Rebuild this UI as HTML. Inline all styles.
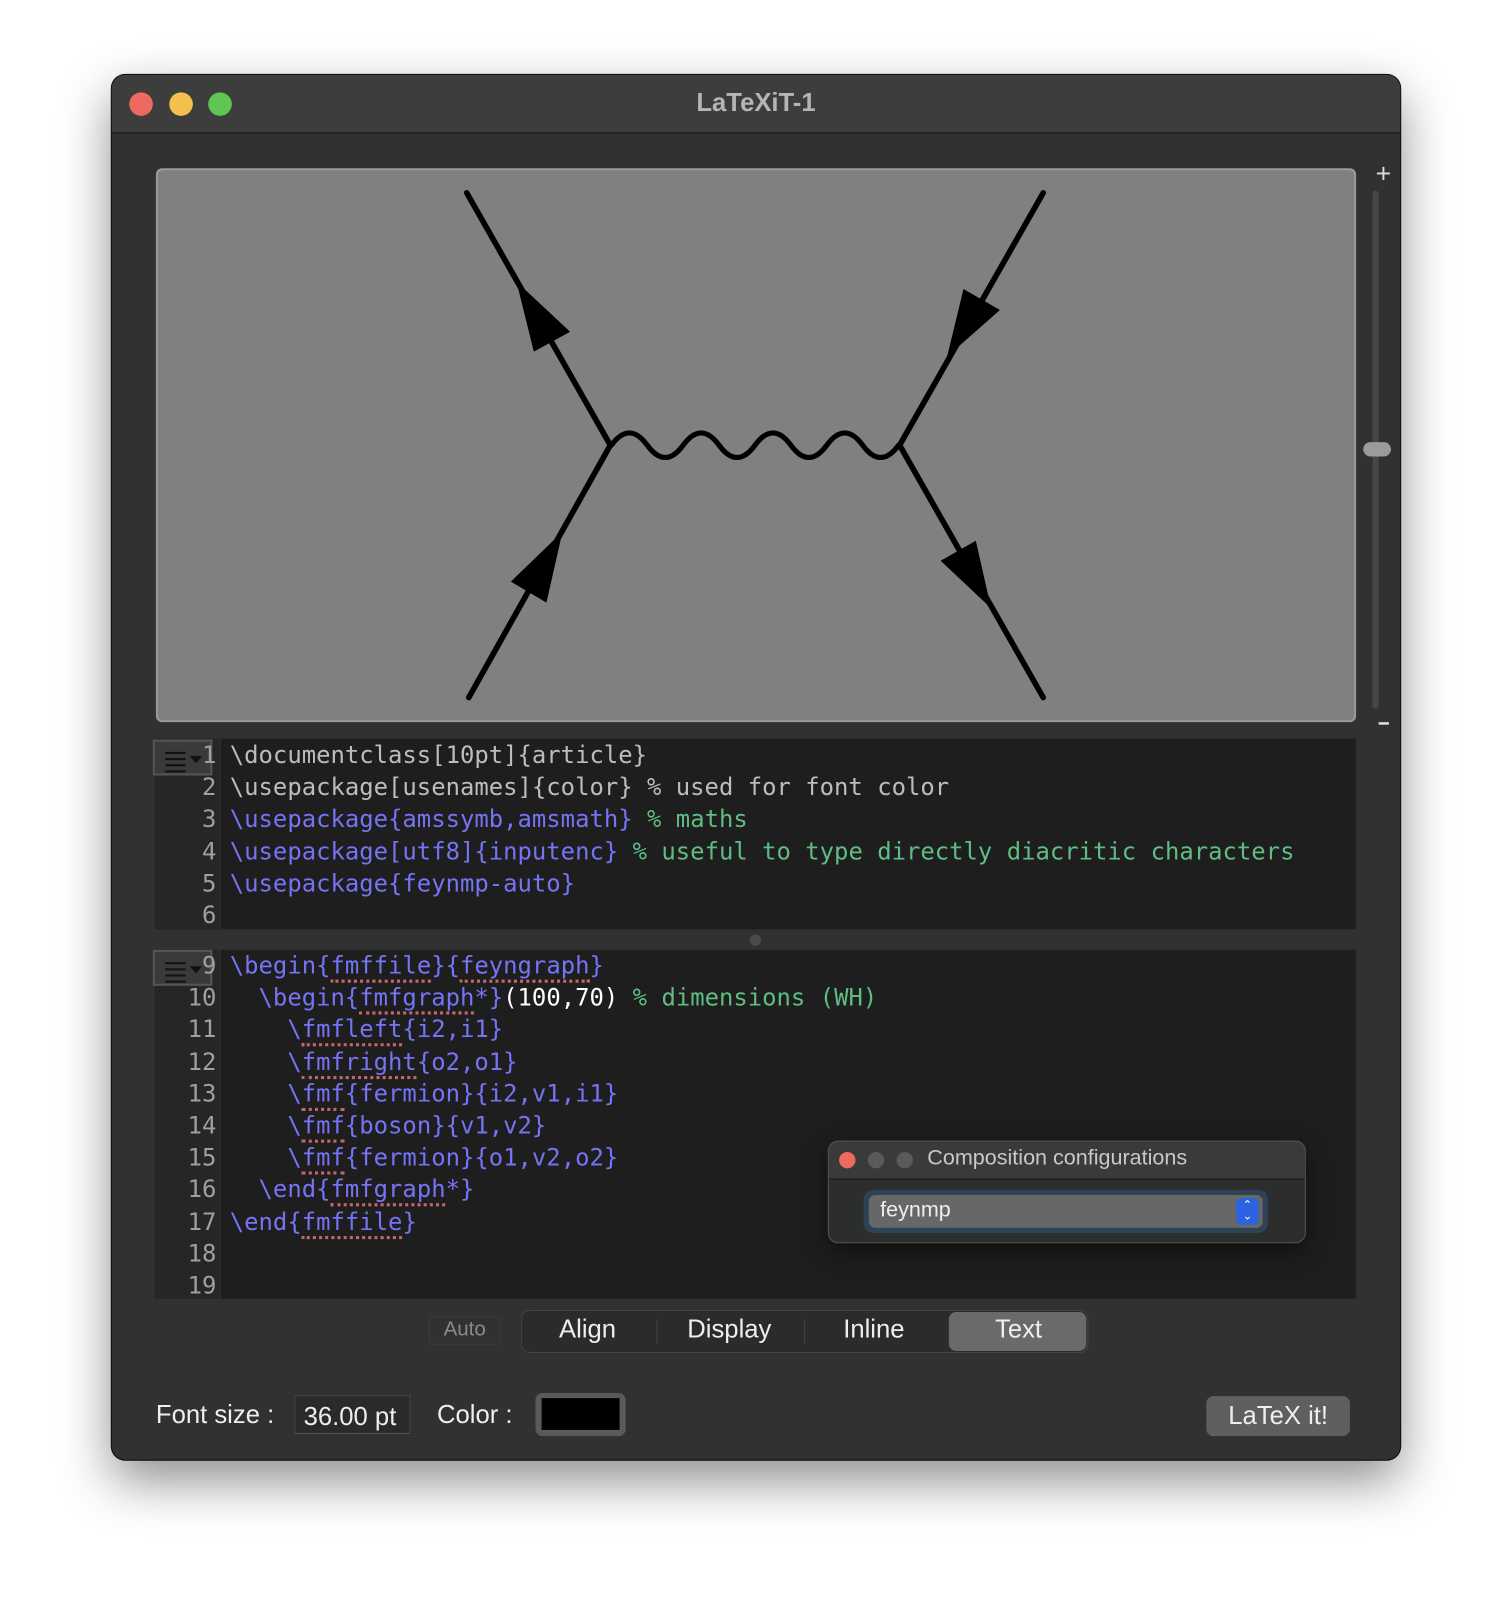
<!DOCTYPE html>
<html><head><meta charset="utf-8"><style>
html,body{margin:0;padding:0;width:1512px;height:1608px;overflow:hidden;background:#fff;}
#w{position:absolute;left:0;top:0;width:1474px;height:1568px;transform:scale(1.02578);transform-origin:0 0;font-family:"Liberation Sans",sans-serif;}
.win{position:absolute;left:109px;top:73px;width:1256px;height:1350px;border-radius:13px;background:#303131;box-shadow:0 20px 50px rgba(0,0,0,.45),0 0 0 1px #111;overflow:hidden;}
.tb{position:absolute;left:0;top:0;width:100%;height:56px;background:#3c3d3c;border-bottom:1.5px solid #111;}
.dot{position:absolute;top:17px;width:23px;height:23px;border-radius:50%;}
.title{position:absolute;left:0;right:0;top:13px;text-align:center;color:#b5b5b5;font-weight:bold;font-size:25px;}
.abs{position:absolute;}
.ed{position:absolute;background:#1e1e1e;font-family:"DejaVu Sans Mono","Liberation Mono",monospace;font-size:23.3px;}
.gut{position:absolute;left:0;top:0;bottom:0;width:63px;background:#262626;border-right:1px solid #333;}
.ln{position:absolute;left:0;width:60px;text-align:right;color:#a0a0a0;height:31.2px;line-height:31.2px;z-index:2;}
.tx{position:absolute;left:73px;white-space:pre;height:31.2px;line-height:31.2px;color:#bcbcbc;}
.b{color:#7474f4}.g{color:#5fbd84}.w{color:#fff}
.u{border-bottom:3px dotted #c26868;}
.gi{position:absolute;left:-2px;width:58px;height:35px;background:#3a3a3a;border:2px solid #555;box-sizing:border-box;}
.hb{position:absolute;left:10px;width:20px;height:2px;background:#111;}
</style></head><body><div id="w">
<div class="win">
 <div class="tb">
  <div class="dot" style="left:17px;background:#ed6a5e"></div>
  <div class="dot" style="left:56px;background:#f5bf4f"></div>
  <div class="dot" style="left:94px;background:#61c554"></div>
  <div class="title">LaTeXiT-1</div>
 </div>
</div>
<div class="abs" style="left:152px;top:164px;width:1170px;height:540px;background:#808080;border:2px solid #9a9a9a;border-radius:6px;box-sizing:border-box;"></div>
<svg class="abs" style="left:0;top:0" width="1474" height="1568" viewBox="0 0 1474 1568">
 <g stroke="#000" stroke-width="5.5" stroke-linecap="round" fill="none">
  <line x1="455" y1="188" x2="595" y2="434"/>
  <line x1="457" y1="680" x2="595" y2="434"/>
  <line x1="1017" y1="188" x2="877" y2="434"/>
  <line x1="877" y1="434" x2="1017" y2="680"/>
  <path stroke-width="5" d="M596 434 q17.5 -24 35 0 t35 0 t35 0 t35 0 t35 0 t35 0 t35 0 t35 0"/>
 </g>
 <g fill="#000">
  <polygon points="503.5,274.6 520.4,342.8 555.8,323.4"/>
  <polygon points="548.4,518.3 498,567 532.7,587.5"/>
  <polygon points="923.3,347.7 939.3,281.7 974.8,302.2"/>
  <polygon points="966.2,593 917,546.6 951.3,527.1"/>
 </g>
 <rect x="1338" y="186" width="6" height="505" rx="3" fill="#464747"/>
 <rect x="1329" y="431" width="27" height="14" rx="7" fill="#9a9b9b"/>
 <text x="1341" y="178" fill="#ddd" font-family="Liberation Sans" font-size="26">+</text>
 <rect x="1344" y="704" width="10" height="2.5" fill="#ddd"/>
</svg>
<div class="ed" style="left:151px;top:720px;width:1171px;height:186px;">
 <div class="gut"></div>
 <div class="gi" style="top:1px"><div class="hb" style="top:10px"></div><div class="hb" style="top:16px"></div><div class="hb" style="top:22px"></div><div class="hb" style="top:28px"></div><div class="abs" style="left:34px;top:14px;border:6px solid transparent;border-top:7px solid #111;"></div></div>
 <div class="ln" style="top:1px">1</div><div class="ln" style="top:32.2px">2</div><div class="ln" style="top:63.4px">3</div><div class="ln" style="top:94.6px">4</div><div class="ln" style="top:125.8px">5</div><div class="ln" style="top:157px">6</div>
 <div class="tx" style="top:1px">\documentclass[10pt]{article}</div>
 <div class="tx" style="top:32.2px">\usepackage[usenames]{color} % used for font color</div>
 <div class="tx b" style="top:63.4px">\usepackage{amssymb,amsmath} <span class="g">% maths</span></div>
 <div class="tx b" style="top:94.6px">\usepackage[utf8]{inputenc} <span class="g">% useful to type directly diacritic characters</span></div>
 <div class="tx b" style="top:125.8px">\usepackage{feynmp-auto}</div>
</div>
<div class="abs" style="left:731px;top:911px;width:11px;height:11px;border-radius:50%;background:#4a4a4a"></div>
<div class="ed" style="left:151px;top:926px;width:1171px;height:340px;">
 <div class="gut"></div>
 <div class="gi" style="top:0px"><div class="hb" style="top:10px"></div><div class="hb" style="top:16px"></div><div class="hb" style="top:22px"></div><div class="hb" style="top:28px"></div><div class="abs" style="left:34px;top:14px;border:6px solid transparent;border-top:7px solid #111;"></div></div>
 <div class="ln" style="top:0px">9</div><div class="ln" style="top:31.2px">10</div><div class="ln" style="top:62.4px">11</div><div class="ln" style="top:93.6px">12</div><div class="ln" style="top:124.8px">13</div><div class="ln" style="top:156px">14</div><div class="ln" style="top:187.2px">15</div><div class="ln" style="top:218.4px">16</div><div class="ln" style="top:249.6px">17</div><div class="ln" style="top:280.8px">18</div><div class="ln" style="top:312px">19</div>
 <div class="tx b" style="top:0px">\begin{<span class="u">fmffile</span>}{<span class="u">feyngraph</span>}</div>
 <div class="tx b" style="top:31.2px">  \begin{<span class="u">fmfgraph</span>*}<span class="w">(100,70)</span> <span class="g">% dimensions (WH)</span></div>
 <div class="tx b" style="top:62.4px">    \<span class="u">fmfleft</span>{i2,i1}</div>
 <div class="tx b" style="top:93.6px">    \<span class="u">fmfright</span>{o2,o1}</div>
 <div class="tx b" style="top:124.8px">    \<span class="u">fmf</span>{fermion}{i2,v1,i1}</div>
 <div class="tx b" style="top:156px">    \<span class="u">fmf</span>{boson}{v1,v2}</div>
 <div class="tx b" style="top:187.2px">    \<span class="u">fmf</span>{fermion}{o1,v2,o2}</div>
 <div class="tx b" style="top:218.4px">  \end{<span class="u">fmfgraph</span>*}</div>
 <div class="tx b" style="top:249.6px">\end{<span class="u">fmffile</span>}</div>
</div>
<div class="abs" style="left:807px;top:1112px;width:466px;height:100px;background:#2c2d2d;border:1.5px solid #555;border-radius:10px;box-sizing:border-box;box-shadow:0 8px 25px rgba(0,0,0,.5);overflow:hidden;">
 <div class="abs" style="left:0;top:0;width:100%;height:36px;background:#393a3a;border-bottom:1.5px solid #151515"></div>
 <div class="abs" style="left:10px;top:10px;width:16px;height:16px;border-radius:50%;background:#ed6a5e"></div>
 <div class="abs" style="left:38px;top:10px;width:16px;height:16px;border-radius:50%;background:#5a5a5a"></div>
 <div class="abs" style="left:66px;top:10px;width:16px;height:16px;border-radius:50%;background:#5a5a5a"></div>
 <div class="abs" style="left:96px;top:4px;color:#c8c8c8;font-size:21px;">Composition configurations</div>
 <div class="abs" style="left:34px;top:47px;width:394px;height:42px;background:#2e4256;border-radius:9px;"></div>
 <div class="abs" style="left:39px;top:52px;width:384px;height:32px;background:#666767;border-radius:6px;"></div>
 <div class="abs" style="left:50px;top:55px;color:#eee;font-size:21px;">feynmp</div>
 <div class="abs" style="left:397px;top:55px;width:22px;height:26px;background:#2d62e0;border-radius:5px;color:#fff;font-size:11px;line-height:11px;text-align:center;padding-top:2px;box-sizing:border-box;">&#8963;<br>&#8964;</div>
</div>
<div class="abs" style="left:418px;top:1283px;width:70px;height:28px;border:1.5px solid #3c3c3c;border-radius:5px;box-sizing:border-box;color:#8a8a8a;font-size:20px;text-align:center;line-height:25px;">Auto</div>
<div class="abs" style="left:508px;top:1277px;width:553px;height:42px;background:#2a2b2b;border:1.5px solid #444;border-radius:8px;box-sizing:border-box;"></div>
<div class="abs" style="left:925px;top:1279px;width:134px;height:38px;background:#6a6a6a;border-radius:7px;"></div>
<div class="abs" style="left:640px;top:1286px;width:1px;height:24px;background:#444"></div>
<div class="abs" style="left:784px;top:1286px;width:1px;height:24px;background:#444"></div>
<div class="abs" style="left:545px;top:1282px;color:#eee;font-size:25px;">Align</div>
<div class="abs" style="left:670px;top:1282px;color:#eee;font-size:25px;">Display</div>
<div class="abs" style="left:822px;top:1282px;color:#eee;font-size:25px;">Inline</div>
<div class="abs" style="left:970px;top:1282px;color:#eee;font-size:25px;">Text</div>
<div class="abs" style="left:152px;top:1365px;color:#eee;font-size:25px;">Font size :</div>
<div class="abs" style="left:287px;top:1360px;width:113px;height:38px;background:#2a2a2a;border:1px solid #444;border-bottom-color:#555;box-sizing:border-box;color:#eee;font-size:25px;padding-left:8px;line-height:40px;">36.00 pt</div>
<div class="abs" style="left:426px;top:1365px;color:#eee;font-size:25px;">Color :</div>
<div class="abs" style="left:522px;top:1358px;width:88px;height:42px;background:#5a5a5a;border-radius:7px;"></div>
<div class="abs" style="left:528px;top:1363px;width:76px;height:31px;background:#000;"></div>
<div class="abs" style="left:1176px;top:1361px;width:140px;height:39px;background:#5f5f5f;border-radius:7px;color:#eee;font-size:25px;text-align:center;line-height:39px;">LaTeX it!</div>
</div></body></html>
